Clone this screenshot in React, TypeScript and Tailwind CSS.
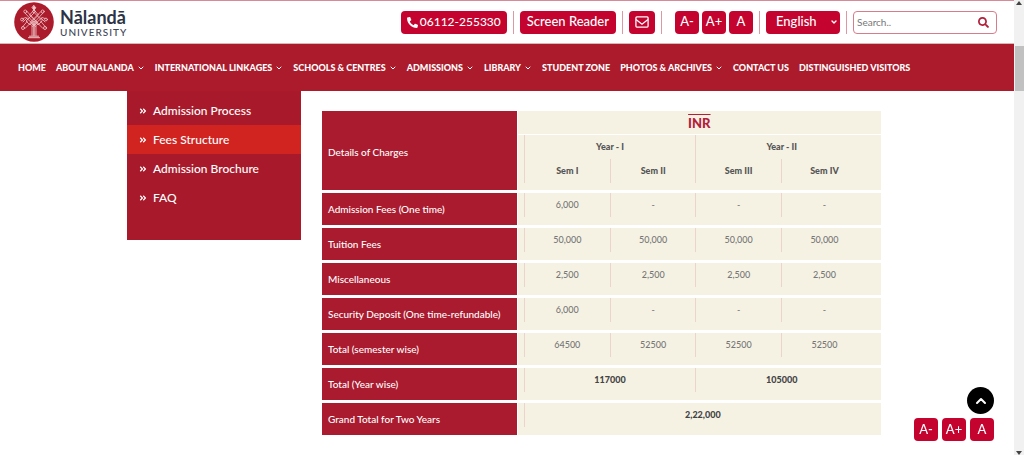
import React from 'react';
import { ChevronDown, ChevronUp } from 'lucide-react';
import { FaPhone, FaSearch, FaAngleDoubleRight } from 'react-icons/fa';

const navItems: { label: string; menu?: boolean }[] = [
  { label: 'HOME' },
  { label: 'ABOUT NALANDA', menu: true },
  { label: 'INTERNATIONAL LINKAGES', menu: true },
  { label: 'SCHOOLS & CENTRES', menu: true },
  { label: 'ADMISSIONS', menu: true },
  { label: 'LIBRARY', menu: true },
  { label: 'STUDENT ZONE' },
  { label: 'PHOTOS & ARCHIVES', menu: true },
  { label: 'CONTACT US' },
  { label: 'DISTINGUISHED VISITORS' },
];

const sideItems = ['Admission Process', 'Fees Structure', 'Admission Brochure', 'FAQ'];

const feeRows: { label: string; values: string[]; bold?: boolean }[] = [
  { label: 'Admission Fees (One time)', values: ['6,000', '-', '-', '-'] },
  { label: 'Tuition Fees', values: ['50,000', '50,000', '50,000', '50,000'] },
  { label: 'Miscellaneous', values: ['2,500', '2,500', '2,500', '2,500'] },
  { label: 'Security Deposit (One time-refundable)', values: ['6,000', '-', '-', '-'] },
  { label: 'Total (semester wise)', values: ['64500', '52500', '52500', '52500'] },
  { label: 'Total (Year wise)', values: ['117000', '105000'], bold: true },
  { label: 'Grand Total for Two Years', values: ['2,22,000'], bold: true },
];

function Emblem() {
  return (
    <svg viewBox="0 0 40 40" className="size-10 shrink-0" aria-hidden="true">
      <circle cx="20" cy="20" r="19.8" fill="#ab1b2b" />
      <g fill="none" stroke="#f0c9cb" strokeWidth="0.8" strokeLinejoin="round" strokeLinecap="round">
        <path d="M20 3.500l1.800 2.300L20 8.200l-1.800-2.400z" fill="#f0c9cb" />
        <circle cx="20" cy="9.400" r="1.300" />
        <path d="M20 8l4.500 5-9 9M20 8l-4.500 5 9 9M20 11l-8 8 4 4 4-4 4 4 4-4z" />
        <path d="M11 11l11 12M13 9.500l10.500 11M29 11L18 23M27 9.500L16.500 20" />
        <path d="M9 16.500l3-1 9.500 9M31 16.500l-3-1-9.500 9M9 20l4-4M31 20l-4-4" />
        <path d="M8.500 25l5-6M11 26.500l6-6M31.500 25l-5-6M29 26.500l-6-6" />
        <circle cx="11.300" cy="9.500" r="1.500" />
        <circle cx="28.700" cy="9.500" r="1.500" />
        <circle cx="8" cy="17.500" r="1.400" />
        <circle cx="32" cy="17.500" r="1.400" />
        <circle cx="9" cy="26" r="1.500" />
        <circle cx="31" cy="26" r="1.500" />
        <path d="M18 23v10.500M19.400 22v11.500M20.700 22v11.500M22 23v10.500" />
        <path d="M15.500 34.200h9M14.500 35.700h11" strokeWidth="1" />
      </g>
    </svg>
  );
}

function EnvelopeIcon() {
  return (
    <svg viewBox="0 0 14 12" className="h-3 w-[14px]" fill="none" stroke="white" strokeWidth="1.3" aria-hidden="true">
      <rect x="0.900" y="0.900" width="12.200" height="10.200" rx="1" />
      <path d="M1 3.500l6 4.700 6-4.700" />
    </svg>
  );
}

function SizeButtons({ wide = false }: { wide?: boolean }) {
  return (
    <div className={wide ? 'flex gap-1' : 'flex gap-[3px]'}>
      {['A-', 'A+', 'A'].map((t) => (
        <button
          key={t}
          type="button"
          className="h-[23px] w-6 rounded bg-[#c4032f] pb-[2px] text-center text-[13px] leading-[20px] font-medium text-white"
        >
          {t}
        </button>
      ))}
    </div>
  );
}

function Divider() {
  return <span className="h-[23px] w-px bg-[#dc98a3]" />;
}

function Header() {
  return (
    <header className="flex h-11 items-center justify-between border-t border-b border-t-[#d98a98] border-b-[#d9b8b8] bg-white pr-[17px] pl-[14px]">
      <a href="#" className="flex items-center gap-[6px]">
        <Emblem />
        <span className="flex flex-col pt-[2px]">
          <span className="text-[18px] leading-[18px] font-bold text-[#2c3345]">Nālandā</span>
          <span className="text-[10px] leading-[12px] font-medium tracking-widest text-[#3f4656]">UNIVERSITY</span>
        </span>
      </a>
      <div className="flex items-center gap-[6px]">
        <a href="#" className="flex h-[23px] items-center gap-[2px] rounded bg-[#c4032f] px-[6px] text-[12px] font-medium text-white">
          <FaPhone className="size-[11px] -scale-x-100" />
          06112-255330
        </a>
        <Divider />
        <a href="#" className="flex h-[23px] items-center rounded bg-[#c4032f] px-[7px] text-[13px] font-medium text-white">
          Screen Reader
        </a>
        <Divider />
        <a href="#" aria-label="Email" className="flex h-[23px] w-[26px] items-center justify-center rounded bg-[#c4032f]">
          <EnvelopeIcon />
        </a>
        <Divider />
        <div className="pl-[7px]">
          <SizeButtons />
        </div>
        <Divider />
        <div className="relative flex items-center">
          <select
            aria-label="Language"
            className="h-[23px] w-[74px] appearance-none rounded bg-[#c4032f] pl-[10px] text-[13px] font-medium text-white"
          >
            <option>English</option>
          </select>
          <ChevronDown className="pointer-events-none absolute right-[2px] size-2" color="white" strokeWidth={4} />
        </div>
        <Divider />
        <form className="flex h-[23px] w-36 items-center rounded border border-[#d77c8b] bg-white pr-[7px] pl-[3px]">
          <input
            aria-label="Search"
            placeholder="Search.."
            className="min-w-0 flex-1 text-[10px] text-gray-600 outline-none placeholder:text-[#777]"
          />
          <button type="button" aria-label="Submit search">
            <FaSearch className="size-[11px] text-[#b3203a]" />
          </button>
        </form>
      </div>
    </header>
  );
}

function Nav() {
  return (
    <nav className="flex h-[47px] items-center gap-[10px] bg-[#ab1b2b] pl-[18px]">
      {navItems.map((n) => (
        <a key={n.label} href="#" className="flex items-center gap-[3px] text-[9px] font-black whitespace-nowrap text-white">
          {n.label}
          {n.menu && <ChevronDown className="size-2" strokeWidth={3} />}
        </a>
      ))}
    </nav>
  );
}

function Sidebar() {
  return (
    <aside className="w-[174px] shrink-0 bg-[#a81a2b] pt-[5px] pb-7">
      {sideItems.map((s) => (
        <a
          key={s}
          href="#"
          className={`flex h-[29px] items-center gap-[6px] pl-[12px] text-[12px] font-medium text-white ${s === 'Fees Structure' ? 'bg-[#d12421]' : ''}`}
        >
          <FaAngleDoubleRight className="size-2" />
          {s}
        </a>
      ))}
    </aside>
  );
}

const labelCell = 'border-r border-b-3 border-white bg-[#ab1b2f] pl-[6px] text-left text-[10px] font-medium text-white';
const cream = 'bg-[#f5f2e4] p-0 align-top';
const inner = 'h-6 border-l border-[#ecd3cb] leading-6';

function FeeTable() {
  return (
    <table className="mt-5 w-full flex-1 table-fixed border-separate border-spacing-0 text-[9px]">
      <colgroup>
        <col className="w-[35%]" />
        <col className="w-[16.5%]" />
        <col className="w-[15.3%]" />
        <col className="w-[15.3%]" />
        <col className="w-[17.9%]" />
      </colgroup>
      <thead>
        <tr className="h-6">
          <th rowSpan={3} className={`${labelCell} pt-[3px]`}>
            Details of Charges
          </th>
          <th colSpan={4} className="border-b border-white bg-[#f5f2e4] p-0 text-[13px] leading-[20px] font-black text-[#b3203a]">
            <span className="overline">INR</span>
          </th>
        </tr>
        <tr className="h-6 text-[#555]">
          {['Year - I', 'Year - II'].map((y, i) => (
            <th key={y} colSpan={2} className={`${cream} font-black ${i === 0 ? 'pl-[6px]' : 'pr-[14px]'}`}>
              <div className={inner}>{y}</div>
            </th>
          ))}
        </tr>
        <tr className="h-[34px] text-[#555]">
          {['Sem I', 'Sem II', 'Sem III', 'Sem IV'].map((s, i) => (
            <th key={s} className={`${cream} border-b-3 border-b-white font-black ${i === 0 ? 'pl-[6px]' : ''} ${i === 3 ? 'pr-[14px]' : ''}`}>
              <div className={inner}>{s}</div>
            </th>
          ))}
        </tr>
      </thead>
      <tbody>
        {feeRows.map((r) => (
          <tr key={r.label} className="h-[35px]">
            <th scope="row" className={labelCell}>
              {r.label}
            </th>
            {r.values.map((v, i) => (
              <td
                key={i}
                colSpan={4 / r.values.length}
                className={`${cream} border-b-3 border-b-white text-center ${i === 0 ? 'pl-[6px]' : ''} ${i > 0 && i === r.values.length - 1 ? 'pr-[14px]' : ''} ${r.bold ? 'font-black text-[#444]' : 'font-medium text-[#777]'}`}
              >
                <div className={inner}>{v}</div>
              </td>
            ))}
          </tr>
        ))}
      </tbody>
    </table>
  );
}

function ScrollTrack() {
  return (
    <div className="flex w-[10px] shrink-0 flex-col items-center bg-[#f1f1f1]" aria-hidden="true">
      <svg viewBox="0 0 6 4" className="mt-px h-1 w-[6px]">
        <path d="M3 0l3 4H0z" fill="#444" />
      </svg>
      <div className="mt-[41px] h-[45px] w-[9px] bg-[#c1c1c1]" />
      <svg viewBox="0 0 6 4" className="mt-auto h-1 w-[6px]">
        <path d="M3 4l3-4H0z" fill="#444" />
      </svg>
    </div>
  );
}

export default function App() {
  return (
    <div className="flex min-h-screen bg-white font-['Lato',sans-serif]">
      <div className="min-w-0 flex-1">
        <Header />
        <Nav />
        <main className="flex items-start gap-[21px] pr-[133px] pl-[127px]">
          <Sidebar />
          <FeeTable />
        </main>
      </div>
      <ScrollTrack />
      <div className="fixed right-[30px] bottom-[14px] flex flex-col items-end gap-1">
        <button
          type="button"
          aria-label="Back to top"
          className="flex size-[27px] items-center justify-center rounded-full bg-black text-white"
        >
          <ChevronUp className="size-4" strokeWidth={3} />
        </button>
        <SizeButtons wide />
      </div>
    </div>
  );
}
